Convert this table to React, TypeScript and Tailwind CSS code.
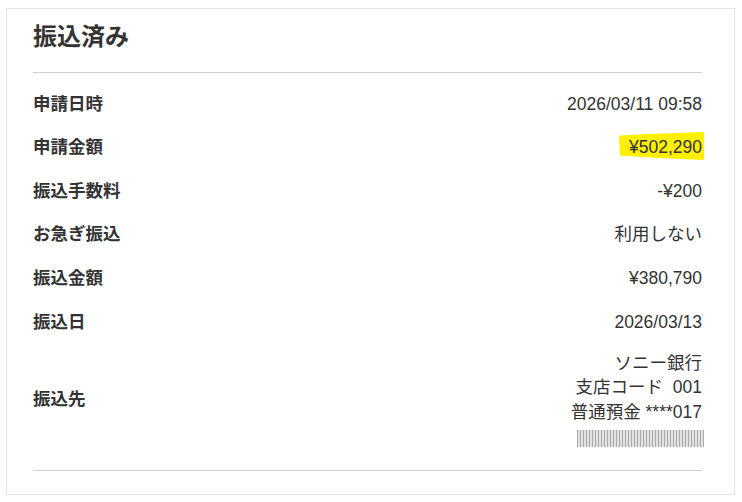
import React from 'react';

const rows = [
  { label: '申請日時', value: '2026/03/11 09:58' },
  { label: '申請金額', value: '¥502,290', marked: true },
  { label: '振込手数料', value: '-¥200' },
  { label: 'お急ぎ振込', value: '利用しない' },
  { label: '振込金額', value: '¥380,790' },
  { label: '振込日', value: '2026/03/13' },
];

export default function App() {
  return (
    <div className="w-[742px] h-[502px] bg-white pl-[6px] pt-[8px] font-['Liberation_Sans','Noto_Sans_CJK_JP',sans-serif] text-[#333]">
      <div className="w-[729px] h-[487px] border border-[#e4e4e4] pl-[26px] pr-[32px]">
        {/* title */}
        <div className="pt-[14px] pb-[21px] border-b border-[#cfcfcf]">
          <h1 className="text-[24px] leading-[28px] font-bold">振込済み</h1>
        </div>

        <div className="pt-[9px]">
          {rows.map(r => (
            <div key={r.label} className="h-[43.6px] flex items-center justify-between text-[17.5px]">
              <span className="font-bold">{r.label}</span>
              {r.marked ? (
                <span className="relative inline-block leading-[24px]">
                  <svg
                    className="absolute left-[-10px] right-[-2px] top-[-3px] bottom-[-1px] w-[calc(100%+12px)] h-[calc(100%+4px)]"
                    viewBox="0 0 86 28"
                    preserveAspectRatio="none"
                  >
                    <path d="M0 3.5 L30 2 L86 0 L86 28 L40 26 L1 23.5 Z" fill="#fff000" />
                  </svg>
                  <span className="relative">{r.value}</span>
                </span>
              ) : (
                <span>{r.value}</span>
              )}
            </div>
          ))}

          {/* 振込先 */}
          <div className="flex items-center justify-between pt-[7px] pb-[23px] border-b border-[#cfcfcf] text-[17.5px]">
            <span className="font-bold">振込先</span>
            <div className="flex flex-col items-end leading-[24.5px]">
              <span>ソニー銀行</span>
              <span>支店コード&nbsp;&nbsp;001</span>
              <span>普通預金 ****017</span>
              <div className="mt-[6px] mr-[-2px] w-[127px] h-[17px] bg-[repeating-linear-gradient(90deg,#a9a9a9_0_1px,#e2e2e2_1px_3px)]" />
            </div>
          </div>
        </div>
      </div>
    </div>
  );
}
